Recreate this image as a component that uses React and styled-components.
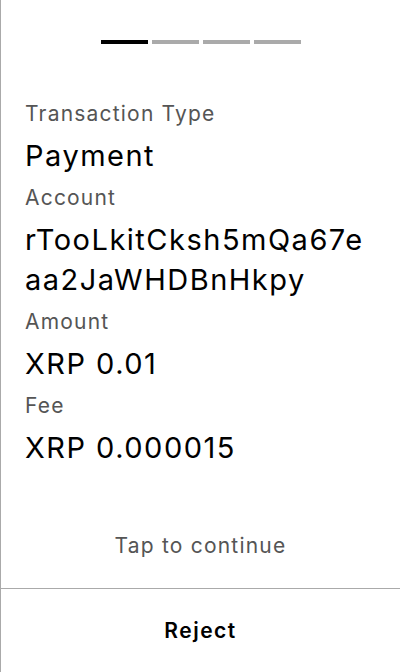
import React from "react";
import styled, { createGlobalStyle } from "styled-components";

const GlobalStyle = createGlobalStyle`
  html, body {
    margin: 0;
    padding: 0;
    background: #fff;
  }
  body {
    font-family: Inter, "Noto Sans", "Liberation Sans", sans-serif;
    color: #000;
  }
`;

const Screen = styled.div`
  box-sizing: border-box;
  display: flex;
  flex-direction: column;
  height: 672px;
  width: 400px;
  border-left: 1px solid #aaa;
  background: #fff;
`;

const Progress = styled.div`
  display: flex;
  justify-content: center;
  gap: 4px;
  padding-top: 40px;
`;

const Segment = styled.div`
  width: 47px;
  height: 4px;
  background: ${(props) => (props.active ? "#000" : "#aaa")};
`;

const Details = styled.div`
  display: flex;
  flex-direction: column;
  gap: 8px;
  padding: 56px 24px 0;
`;

const Label = styled.div`
  font-size: 21px;
  line-height: 28px;
  letter-spacing: 1.2px;
  color: #555;
`;

const Value = styled.div`
  font-size: 29px;
  line-height: 40px;
  letter-spacing: 1.5px;
  color: #000;
  word-break: break-all;
`;

const Hint = styled.div`
  margin-top: auto;
  padding-bottom: 28px;
  text-align: center;
  font-size: 21px;
  line-height: 28px;
  letter-spacing: 1.2px;
  color: #555;
`;

const Footer = styled.div`
  border-top: 1px solid #aaa;
  display: flex;
  align-items: center;
  justify-content: center;
  height: 83px;
`;

const RejectButton = styled.button`
  border: none;
  background: none;
  font-family: inherit;
  font-size: 21px;
  font-weight: 600;
  letter-spacing: 1.5px;
  color: #000;
  cursor: pointer;
  padding: 10px 20px;
`;

const fields = [
  { label: "Transaction Type", value: "Payment" },
  { label: "Account", value: "rTooLkitCksh5mQa67eaa2JaWHDBnHkpy" },
  { label: "Amount", value: "XRP 0.01" },
  { label: "Fee", value: "XRP 0.000015" },
];

function App() {
  return (
    <>
      <GlobalStyle />
      <Screen>
        <Progress>
          <Segment active />
          <Segment />
          <Segment />
          <Segment />
        </Progress>
        <Details>
          {fields.map((f) => (
            <React.Fragment key={f.label}>
              <Label>{f.label}</Label>
              <Value>{f.value}</Value>
            </React.Fragment>
          ))}
        </Details>
        <Hint>Tap to continue</Hint>
        <Footer>
          <RejectButton>Reject</RejectButton>
        </Footer>
      </Screen>
    </>
  );
}

export default App;
